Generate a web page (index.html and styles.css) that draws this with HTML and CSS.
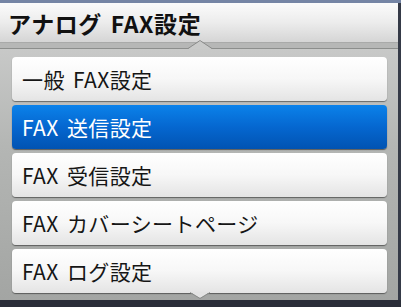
FILE: index.html
```html
<!DOCTYPE html>
<html lang="ja">
<head>
<meta charset="utf-8">
<link rel="stylesheet" href="styles.css">
</head>
<body>
<div class="screen">
  <div class="topstrip"></div>
  <div class="main">
    <div class="content">
      <div class="header">アナログ FAX設定</div>
      <div class="panel">
        <div class="band">
          <svg class="notch-up" width="24" height="9" viewBox="0 0 24 9"><polygon points="0,9 12,1 24,9" fill="#c9cac9"/><polyline points="0,8.5 12,0.5 24,8.5" fill="none" stroke="#8c8e8c" stroke-width="1"/></svg>
        </div>
        <div class="list">
          <div class="item">一般 FAX設定</div>
          <div class="item selected">FAX 送信設定</div>
          <div class="item">FAX 受信設定</div>
          <div class="item">FAX カバーシートページ</div>
          <div class="item last">FAX ログ設定
            <svg class="tail" width="20" height="7" viewBox="0 0 20 7"><polygon points="0,0 10,6 20,0" fill="#e3e3e3"/><polyline points="0,0.5 10,6.5 20,0.5" fill="none" stroke="#8a8c8a" stroke-width="1"/></svg>
          </div>
        </div>
      </div>
    </div>
    <div class="rightstrip"></div>
  </div>
</div>
</body>
</html>
```
FILE: styles.css
```css
html, body {
  margin: 0;
  padding: 0;
}
body {
  width: 401px;
  height: 307px;
  overflow: hidden;
  background: #2a2e39;
  font-family: "Noto Sans CJK JP", "Noto Sans", sans-serif;
}
.screen {
  display: flex;
  flex-direction: column;
  width: 401px;
  height: 300px;
}
.topstrip {
  height: 3px;
  background: #7585a5;
}
.main {
  flex: 1;
  display: flex;
}
.content {
  width: 398px;
  display: flex;
  flex-direction: column;
}
.rightstrip {
  width: 3px;
  background: #353a47;
}
.header {
  height: 40px;
  box-sizing: border-box;
  padding-left: 8px;
  display: flex;
  align-items: center;
  font-size: 23px;
  font-weight: bold;
  letter-spacing: 0.6px;
  word-spacing: 3px;
  color: #111;
  background: linear-gradient(#fbfbfb, #ececec 50%, #d5d5d5);
  border-bottom: 1px solid #a9aaa9;
}
.panel {
  flex: 1;
  display: flex;
  flex-direction: column;
  background: linear-gradient(#c9cac9, #b4b6b4 40%, #a3a5a3);
}
.band {
  position: relative;
  height: 5px;
  background: #b6b7b6;
  border-bottom: 1px solid #8c8e8c;
}
.notch-up {
  position: absolute;
  left: 188px;
  top: -3px;
}
.list {
  display: flex;
  flex-direction: column;
  gap: 4px;
  padding: 8px 11px 0 12px;
}
.item {
  position: relative;
  height: 44px;
  box-sizing: border-box;
  padding-left: 10px;
  display: flex;
  align-items: center;
  font-size: 21px;
  letter-spacing: 0.4px;
  word-spacing: 3px;
  color: #161616;
  border-radius: 4px;
  background: linear-gradient(#ffffff, #f7f7f7 50%, #e4e4e4);
  box-shadow: 0 1px 1px rgba(0,0,0,0.45);
}
.item.selected {
  color: #ffffff;
  background: linear-gradient(#0b82ea, #0567d0 50%, #0153b2);
  box-shadow: 0 1px 1px rgba(0,0,0,0.5);
}
.tail {
  position: absolute;
  left: 178px;
  bottom: -6px;
}
```
